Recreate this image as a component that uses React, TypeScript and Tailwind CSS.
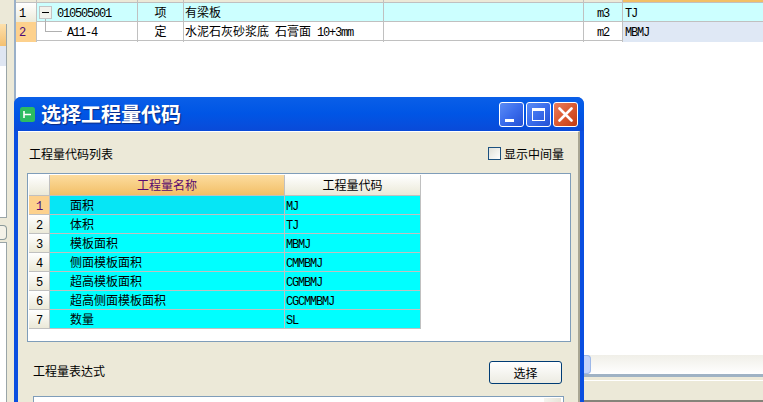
const topRows = [
  { no: '1', code: '010505001', type: '项', name: '有梁板', extra: '', unit: 'm3', qty: 'TJ' },
  { no: '2', code: 'A11-4', type: '定', name: '水泥石灰砂浆底 石膏面', extra: '10+3mm', unit: 'm2', qty: 'MBMJ' },
]

const codes = [
  { no: '1', name: '面积', code: 'MJ' },
  { no: '2', name: '体积', code: 'TJ' },
  { no: '3', name: '模板面积', code: 'MBMJ' },
  { no: '4', name: '侧面模板面积', code: 'CMMBMJ' },
  { no: '5', name: '超高模板面积', code: 'CGMBMJ' },
  { no: '6', name: '超高侧面模板面积', code: 'CGCMMBMJ' },
  { no: '7', name: '数量', code: 'SL' },
]

function Latin({ children }: { children: React.ReactNode }) {
  return <span className="font-['Liberation_Mono',monospace] text-[12px] tracking-[-1.2px]">{children}</span>
}

function LeftStrip() {
  return (
    <div className="flex h-full w-4 shrink-0 flex-col border-r-2 border-[#9ab0c8] bg-[#ece9d8]">
      <div className="flex h-[218px] w-[7px] flex-col pt-6">
        <div className="flex flex-1 flex-col border-r border-[#9aa5a8]">
          <div className="h-[22px] bg-gradient-to-b from-[#fde0ac] to-[#f4c070]" />
          <div className="h-[20px] bg-[#dfe6f2]" />
          <div className="flex-1 bg-white" />
        </div>
        <div className="h-px bg-[#9aa5a8]" />
      </div>
      <div className="mt-[7px] h-[15px] w-[7px] rounded-r-sm border border-l-0 border-[#8c9a9a] bg-[#f4f2e8]" />
      <div className="mt-[2px] w-[7px] flex-1 border-t border-r border-[#9aa5a8] bg-white" />
    </div>
  )
}

function TopRow({ row, first }: { row: (typeof topRows)[number]; first: boolean }) {
  return (
    <div className={`grid h-[19px] grid-cols-[21px_101px_46px_200px_200px_39px_1fr] border-b border-[#c0c0c0] text-[12px] leading-[18px] text-black ${first ? 'bg-[#ccffff]' : 'bg-white'}`}>
      <div className={`border-r border-[#c0c0c0] pl-[3px] ${first ? 'bg-gradient-to-b from-white to-[#ebe9d8]' : 'bg-[#fdd18d] text-[#4b0a78]'}`}>
        <Latin>{row.no}</Latin>
      </div>
      <div className={`relative border-r border-[#c0c0c0] ${first ? 'pl-[20px]' : 'pl-[30px]'}`}>
        {first ? (
          <span className="absolute left-[2px] top-[3px] flex h-[13px] w-[13px] items-center justify-center border border-[#c4c4c4] bg-[#f2f2ec]">
            <span className="h-px w-[7px] bg-black" />
          </span>
        ) : (
          <span className="absolute left-[8px] top-[-3px] h-[13px] w-[17px] border-b border-l border-[#b0b0b0]" />
        )}
        <Latin>{row.code}</Latin>
      </div>
      <div className="border-r border-[#c0c0c0] text-center">{row.type}</div>
      <div className="border-r border-[#c0c0c0] pl-px whitespace-nowrap [word-spacing:3.3px]">
        {row.name} {row.extra && <Latin>{row.extra}</Latin>}
      </div>
      <div className="border-r border-[#c0c0c0]" />
      <div className="border-r border-[#c0c0c0] text-center">
        <Latin>{row.unit}</Latin>
      </div>
      <div className={`pl-[2px] ${first ? '' : 'bg-[#dfe8f5]'}`}>
        <Latin>{row.qty}</Latin>
      </div>
    </div>
  )
}

function TitleButton({ kind }: { kind: 'min' | 'max' | 'close' }) {
  const bg =
    kind === 'close'
      ? 'bg-gradient-to-br from-[#e87c5c] via-[#dc5a30] to-[#c23a10]'
      : 'bg-gradient-to-br from-[#5c8cf4] via-[#3a6cec] to-[#2450d4]'
  return (
    <div className={`flex h-[25px] w-[25px] items-center justify-center rounded-[3px] border border-white ${bg}`}>
      {kind === 'min' && <span className="mt-[13px] mr-[5px] h-[3px] w-[9px] bg-white" />}
      {kind === 'max' && (
        <span className="h-[13px] w-[13px] border border-t-[3px] border-white" />
      )}
      {kind === 'close' && (
        <svg width="15" height="15" viewBox="0 0 15 15">
          <path d="M1.5 1.5 L13.5 13.5 M13.5 1.5 L1.5 13.5" stroke="white" strokeWidth="2.6" strokeLinecap="round" />
        </svg>
      )}
    </div>
  )
}

function CodeGrid() {
  return (
    <div className="grid w-[392px] grid-cols-[21px_235px_136px] text-[12px] leading-[18px] text-black">
      <div className="h-[21px] border-r border-b border-[#c0c0c0] bg-gradient-to-b from-white to-[#ebe9d8]" />
      <div className="h-[21px] border-r border-b border-[#c0c0c0] bg-gradient-to-b from-[#fcdc9e] to-[#f2bf66] pt-px text-center text-[#5a0a6e]">
        工程量名称
      </div>
      <div className="h-[21px] border-b border-r border-[#c0c0c0] bg-gradient-to-b from-white to-[#ebe9d8] pt-px text-center">
        工程量代码
      </div>
      {codes.map((c, i) => (
        <div key={c.no} className="contents">
          <div className={`h-[19px] border-r border-b border-[#c0c0c0] text-center ${i === 0 ? 'bg-[#fdd18d] text-[#4b0a78]' : 'bg-gradient-to-b from-white to-[#ebe9d8]'}`}>
            <Latin>{c.no}</Latin>
          </div>
          <div className={`h-[19px] border-r border-b border-[#c0c0c0] pl-5 ${i === 0 ? 'bg-[#06e6f5]' : 'bg-[#00ffff]'}`}>
            {c.name}
          </div>
          <div className="h-[19px] border-r border-b border-[#c0c0c0] bg-[#00ffff] pl-px">
            <Latin>{c.code}</Latin>
          </div>
        </div>
      ))}
    </div>
  )
}

function Dialog() {
  return (
    <div className="absolute left-[14px] top-[97px] flex h-[340px] w-[570px] flex-col overflow-hidden rounded-t-[7px] bg-[#0a4ee0]">
      <div className="flex h-[34px] shrink-0 items-center bg-gradient-to-b from-[#0a5fe8] via-[#0055e5] to-[#0a4ad8] pl-[6px] pr-[6px]">
        <svg width="15" height="15" viewBox="0 0 15 15" className="shrink-0">
          <rect width="15" height="15" rx="2.5" fill="#2dbb62" />
          <path d="M4 4 V11 M4 7.5 H10 M8 7.5 H11" stroke="white" strokeWidth="1.6" fill="none" />
        </svg>
        <span className="ml-[6px] text-[20px] leading-none font-bold text-white [text-shadow:1px_1px_1px_#0a2a80]">
          选择工程量代码
        </span>
        <div className="ml-auto flex gap-[2px]">
          <TitleButton kind="min" />
          <TitleButton kind="max" />
          <TitleButton kind="close" />
        </div>
      </div>
      <div className="ml-[4px] mr-[4px] flex-1 border-t border-r-2 border-white border-r-[#a9a693] bg-[#ece9d8] pl-[9px] pr-[7px]">
        <div className="flex h-[41px] items-center justify-between pt-[2px] pr-[7px] pl-[2px] text-[12px] text-black">
          <span>工程量代码列表</span>
          <label className="flex items-center gap-[3px]">
            <span className="h-[13px] w-[13px] border border-[#1c5180] bg-gradient-to-br from-[#e0e0d8] to-white" />
            显示中间量
          </label>
        </div>
        <div className="h-[169px] w-[544px] border border-[#7f9db9] bg-white pl-px pt-px">
          <CodeGrid />
        </div>
        <div className="mt-[19px] flex h-[23px] items-center justify-between pr-[9px] pl-[6px] text-[12px] text-black">
          <span className="pb-[3px]">工程量表达式</span>
          <button className="h-[23px] w-[73px] rounded-[3px] border border-[#003c74] bg-gradient-to-b from-white to-[#ecebe2] text-[12px] text-black">
            选择
          </button>
        </div>
        <div className="relative ml-[6px] mt-[12px] h-[60px] w-[531px] border border-[#7f9db9] bg-white pl-[1px] pt-[2px] leading-[12px]">
          <Latin>MBMJ</Latin>
          <span className="absolute right-[2px] top-[1px] h-[20px] w-[17px] bg-gradient-to-r from-[#f4f4ee] to-[#e6e4d8]" />
        </div>
      </div>
    </div>
  )
}

export default function App() {
  return (
    <div className="relative flex h-[402px] w-[763px] overflow-hidden bg-white font-['Noto_Sans_CJK_SC',sans-serif]">
      <LeftStrip />
      <div className="flex min-w-0 flex-1 flex-col">
        <div className="grid h-[3px] grid-cols-[21px_101px_46px_200px_200px_39px_1fr] border-b border-[#c0c0c0] bg-[#ece9d8]">
          <span className="border-r border-[#c0c0c0]" />
          <span className="border-r border-[#c0c0c0]" />
          <span className="border-r border-[#c0c0c0]" />
          <span className="border-r border-[#c0c0c0]" />
          <span className="border-r border-[#c0c0c0]" />
          <span className="border-r border-[#c0c0c0]" />
          <span className="bg-[#f2bf66]" />
        </div>
        {topRows.map((r, i) => (
          <TopRow key={r.no} row={r} first={i === 0} />
        ))}
        <div className="flex-1" />
        <div className="flex h-[19px] bg-gradient-to-b from-[#f0efe8] to-white">
          <span className="ml-[568px] h-[19px] w-[7px] rounded-r-sm border border-l-0 border-[#9db8e8] bg-[#c4d4fa]" />
        </div>
        <div className="h-[3px] bg-[#9fb2c4]" />
        <div className="h-[3px] bg-[#ece9d8]" />
        <div className="h-px bg-white" />
        <div className="h-[19px] bg-[#ece9d8]" />
        <div className="h-[2px] bg-[#85847a]" />
      </div>
      <Dialog />
    </div>
  )
}
